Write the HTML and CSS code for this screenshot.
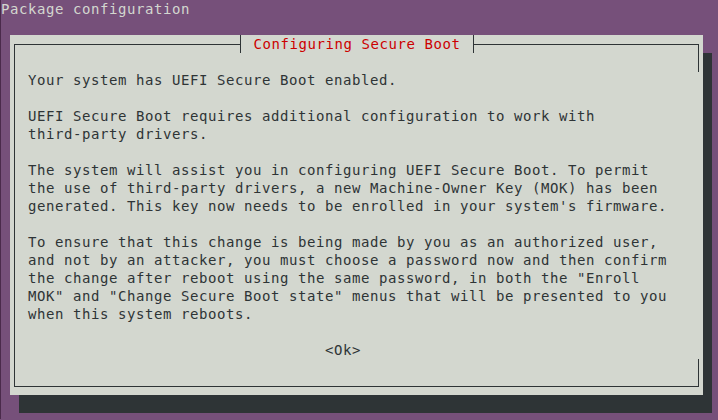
FILE: index.html
```html
<!DOCTYPE html>
<html>
<head>
<meta charset="utf-8">
<link rel="stylesheet" href="styles.css">
</head>
<body>
<div class="term">
  <div class="topbar">Package configuration</div>
  <div class="dialog">
    <div class="frame">
      <div class="title-row"><span class="title">Configuring Secure Boot</span></div>
      <div class="content">
        <div class="para">
          <div class="line">Your system has UEFI Secure Boot enabled.</div>
        </div>
        <div class="para">
          <div class="line">UEFI Secure Boot requires additional configuration to work with</div>
          <div class="line">third-party drivers.</div>
        </div>
        <div class="para">
          <div class="line">The system will assist you in configuring UEFI Secure Boot. To permit</div>
          <div class="line">the use of third-party drivers, a new Machine-Owner Key (MOK) has been</div>
          <div class="line">generated. This key now needs to be enrolled in your system's firmware.</div>
        </div>
        <div class="para">
          <div class="line">To ensure that this change is being made by you as an authorized user,</div>
          <div class="line">and not by an attacker, you must choose a password now and then confirm</div>
          <div class="line">the change after reboot using the same password, in both the "Enroll</div>
          <div class="line">MOK" and "Change Secure Boot state" menus that will be presented to you</div>
          <div class="line">when this system reboots.</div>
        </div>
      </div>
      <div class="buttons"><span class="btn">&lt;Ok&gt;</span></div>
    </div>
  </div>
</div>
</body>
</html>
```
FILE: styles.css
```css
html, body {
  margin: 0;
  padding: 0;
  background: #76507a;
}
body {
  width: 718px;
  height: 420px;
  overflow: hidden;
}
.term {
  box-sizing: border-box;
  height: 420px;
  background: #76507a;
  border-left: 1px solid #4a2a4b;
  font-family: "DejaVu Sans Mono", monospace;
  font-size: 14px;
  letter-spacing: 0.57px;
  line-height: 18px;
  color: #2e3436;
}
.topbar {
  box-sizing: border-box;
  margin-top: -1px;
  padding-top: 1px;
  height: 18px;
  color: #d3d7cf;
  white-space: pre;
}
.dialog {
  box-sizing: border-box;
  margin-top: 18px;
  margin-left: 9px;
  width: 693px;
  height: 360px;
  padding: 9px 4px 8px 4px;
  background: #d3d7cf;
  box-shadow: 9px 18px 0 0 #2e3436;
}
.frame {
  position: relative;
  box-sizing: border-box;
  height: 100%;
  border-top: 1px solid #2e3436;
  border-left: 1px solid #2e3436;
  border-bottom: 1px solid #2e3436;
  display: flex;
  flex-direction: column;
}
.frame::before,
.frame::after {
  content: "";
  position: absolute;
  right: 0;
  width: 1px;
  height: 28px;
  background: #2e3436;
}
.frame::before { top: -1px; }
.frame::after { bottom: -1px; }
.title-row {
  margin-top: -10px;
  height: 18px;
  display: flex;
  justify-content: center;
}
.title {
  display: block;
  box-sizing: border-box;
  height: 18px;
  padding: 1px 13px 0 13px;
  border-left: 1px solid #2e3436;
  border-right: 1px solid #2e3436;
  background: #d3d7cf;
  color: #cc0000;
  white-space: pre;
  line-height: 17px;
}
.content {
  padding-left: 13px;
  padding-top: 18px;
}
.para {
  margin-bottom: 18px;
}
.line {
  box-sizing: border-box;
  height: 18px;
  padding-top: 1px;
  white-space: pre;
  line-height: 17px;
}
.buttons {
  box-sizing: border-box;
  padding-left: 310px;
  padding-top: 1px;
  height: 18px;
  line-height: 17px;
}
.btn {
  white-space: pre;
}
```
